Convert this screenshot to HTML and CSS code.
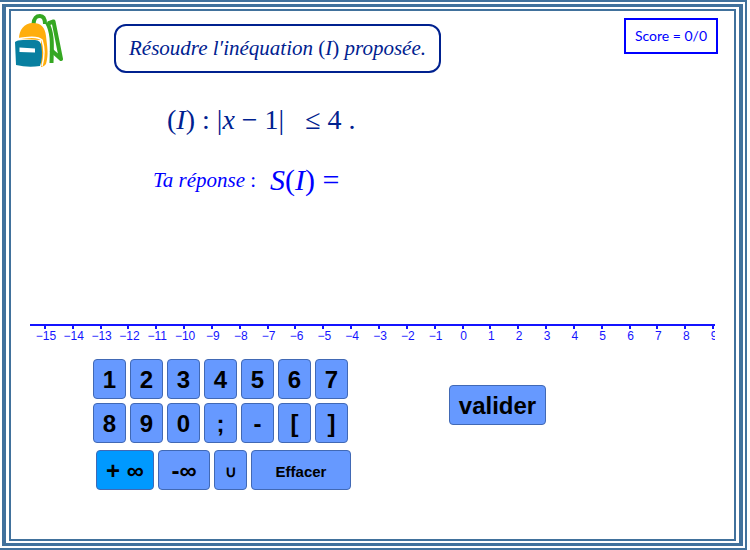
FILE: index.html
```html
<!DOCTYPE html>
<html lang="fr">
<head>
<meta charset="utf-8">
<title>Inéquations avec valeur absolue</title>
<link rel="stylesheet" href="styles.css">
</head>
<body>
<div class="frame-outer">
<div class="frame-middle">
<main class="frame-inner">
  <header class="top">
    <svg class="logo" viewBox="0 0 48 54" aria-hidden="true">
      <path d="M18.500 10 C19 4 21 2 25 2 C28 2 30 4 30 10" fill="none" stroke="#35a722" stroke-width="4"/>
      <path d="M33 9.500 L38.500 7.500 L46 45 L36 36" fill="none" stroke="#35a722" stroke-width="4" stroke-linejoin="round"/>
      <path d="M32 8.500 C38 19 37 31 36.500 49" fill="none" stroke="#35a722" stroke-width="4"/>
      <path d="M4 25 C4 16 9 9 18 9 C26 9 30 13 31 22 C32 32 34 40 31 50 Q29 53 26 53 L26 26 Z" fill="#ffae0d"/>
      <path d="M2 25 Q22 21 27 26 Q31 38 27 52" fill="none" stroke="#fff" stroke-width="1.500"/>
      <path d="M0 28 Q2 26 8 26 L20 26 Q26 26 26.500 33 Q28 44 25 52 Q13 54 1 51 Z" fill="#087fa0"/>
      <path d="M4.500 33.500 L20 34.500 L20 38.500 L4.500 38 Z" fill="#fff"/>
    </svg>
    <h1 class="prompt"><i>Résoudre l′inéquation</i> (<i>I</i>) <i>proposée.</i></h1>
    <p class="score">Score = 0/0</p>
  </header>

  <p class="equation">(<i>I</i>) : |<i>x</i> − 1|&nbsp;&nbsp; ≤ 4 .</p>
  <p class="answer"><span class="answer-label"><i>Ta réponse</i> :</span><span class="answer-set"><i>S</i>(<i>I</i>) =</span></p>

  <div class="axis">
    <ol class="ticks">
      <li>−15</li><li>−14</li><li>−13</li><li>−12</li><li>−11</li>
      <li>−10</li><li>−9</li><li>−8</li><li>−7</li><li>−6</li>
      <li>−5</li><li>−4</li><li>−3</li><li>−2</li><li>−1</li>
      <li>0</li><li>1</li><li>2</li><li>3</li><li>4</li>
      <li>5</li><li>6</li><li>7</li><li>8</li><li>9</li>
    </ol>
  </div>

  <div class="controls">
    <div class="keypad">
      <div class="keys">
        <button type="button">1</button><button type="button">2</button><button type="button">3</button><button type="button">4</button><button type="button">5</button><button type="button">6</button><button type="button">7</button>
      </div>
      <div class="keys">
        <button type="button">8</button><button type="button">9</button><button type="button">0</button><button type="button">;</button><button type="button">-</button><button type="button">[</button><button type="button">]</button>
      </div>
      <div class="keys keys-wide">
        <button type="button" class="plus-inf">+ ∞</button><button type="button" class="minus-inf">-∞</button><button type="button" class="union">∪</button><button type="button" class="clear">Effacer</button>
      </div>
    </div>
    <button type="button" class="submit">valider</button>
  </div>
</main>
</div>
</div>
</body>
</html>
```
FILE: styles.css
```css
* { box-sizing: border-box; }

body {
  margin: 0;
  background: #fff;
  font-family: "Liberation Sans", Arial, sans-serif;
}

h1, p, ol { margin: 0; padding: 0; font-weight: normal; }

/* Triple frame */
.frame-outer {
  display: flex;
  min-height: 100vh;
  margin-right: 3px;
  padding: 2px;
  border: solid #41719c;
  border-width: 2px 2px 2px 0;
}
.frame-middle {
  display: flex;
  flex: 1;
  min-width: 0;
  padding: 2px 3px;
  border: solid #41719c;
  border-width: 3px 4px;
}
.frame-inner {
  flex: 1;
  min-width: 0;
  border: 2px solid #41719c;
}

/* Header */
.top {
  display: flex;
  align-items: flex-start;
  padding: 3px 16px 0 4px;
}
.logo { width: 48px; height: 54px; }
.prompt {
  margin: 10px 0 0 51px;
  padding: 0 13px;
  border: 2px solid #00218f;
  border-radius: 12px;
  color: #00218f;
  font: 21px/45px "Liberation Serif", "Times New Roman", serif;
  white-space: nowrap;
}
.score {
  margin: 4px 0 0 auto;
  padding: 0 9px;
  border: 2px solid #00f;
  color: #00f;
  font: 14px/32px Lato, sans-serif;
  white-space: nowrap;
}

/* Statement */
.equation {
  margin: 29px 0 0 156px;
  color: #00218f;
  font: 28px/36px "Liberation Serif", "Times New Roman", serif;
}
.answer {
  display: flex;
  align-items: center;
  gap: 14px;
  margin: 24px 0 0 142px;
  color: #00f;
  font: 30px/36px "Liberation Serif", "Times New Roman", serif;
}
.answer-label { font-size: 21px; }

/* Number line */
.axis {
  margin: 126px 19px 0;
  border-top: 2px solid #1414ff;
  overflow: hidden;
}
.ticks {
  display: grid;
  grid-template-columns: repeat(25, 1fr);
  width: calc(100% + 11px);
  margin-left: 2px;
  list-style: none;
  color: #1414ff;
  font-size: 12px;
  line-height: 14px;
  text-align: center;
}
.ticks li::before {
  content: "";
  display: block;
  width: 2px;
  height: 3px;
  margin-left: calc(50% - 2px);
  background: #1414ff;
}

/* Keypad */
.controls {
  display: flex;
  align-items: flex-start;
  margin: 16px 0 0 82px;
}
.keys { display: flex; gap: 4px; margin-bottom: 4px; }
.keys-wide { margin: 7px 0 0 3px; }
button {
  width: 33px;
  height: 40px;
  padding: 2px 0 0;
  border: 1px solid #4169b5;
  border-radius: 4px;
  background: #69f;
  color: #000;
  font: bold 24px "Liberation Sans", Arial, sans-serif;
  white-space: nowrap;
}
.plus-inf { width: 58px; background: #09f; }
.minus-inf { width: 52px; }
.union { font-size: 16px; }
.clear { width: 100px; font-size: 15px; }
.submit { width: 97px; margin: 26px 0 0 98px; }
```
